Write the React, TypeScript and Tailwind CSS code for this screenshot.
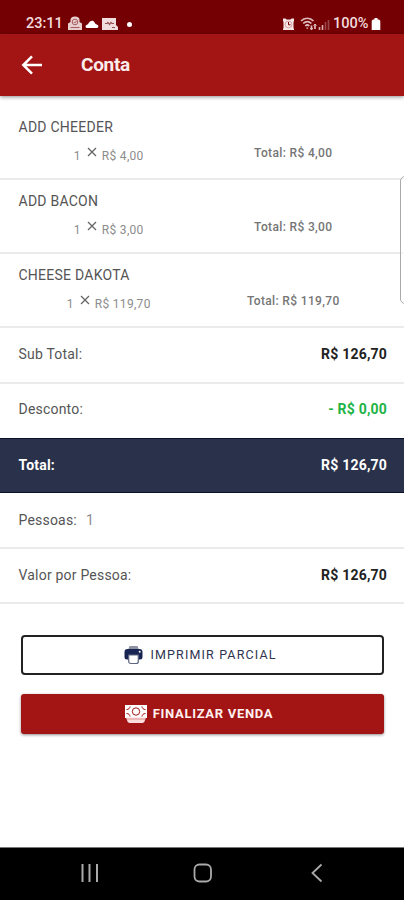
import React from 'react';
import clsx from 'clsx';

interface OrderItem {
  name: string;
  qty: number;
  price: string;
  total: string;
}

const items: OrderItem[] = [
  { name: 'ADD CHEEDER', qty: 1, price: 'R$ 4,00', total: 'R$ 4,00' },
  { name: 'ADD BACON', qty: 1, price: 'R$ 3,00', total: 'R$ 3,00' },
  { name: 'CHEESE DAKOTA', qty: 1, price: 'R$ 119,70', total: 'R$ 119,70' },
];

function StatusBar() {
  return (
    <div className="flex h-[34px] items-end justify-between bg-[#750003] pb-[1px] pl-[26px] pr-[23px] text-[#f3dcdc]">
      <div className="flex h-[18px] items-center">
        <span className="w-[37px] whitespace-nowrap text-[14.5px] font-medium leading-[18px]">23:11</span>
        <svg className="ml-[4px]" width="16" height="16" viewBox="0 0 16 16">
          <path d="M1 14V7.500L3.500 6V4a4.500 3.500 0 0 1 9 0v2L15 7.500V14z" fill="#e8cfcf" />
          <circle cx="8" cy="6" r="2.800" fill="none" stroke="#a85a5c" strokeWidth="1" />
          <path d="M6.800 6l1 1 1.700-2M3.500 11.500h9" fill="none" stroke="#a85a5c" strokeWidth="1" />
        </svg>
        <svg className="ml-[2px]" width="14" height="16" viewBox="0 0 14 16">
          <path d="M2 12a1.500 1.500 0 0 1-.5-2.900C3 8.500 3.500 7 5 5.500c1.400-1.300 3.300-1.100 4.300.5.600 1.300 1.500 2.200 2.900 2.800A1.700 1.700 0 0 1 12.300 12z" fill="#fff" />
        </svg>
        <svg className="ml-[3px]" width="16" height="16" viewBox="0 0 16 16">
          <path d="M0 2h14v7l2 2v3H0z" fill="#f0dede" />
          <path d="M3 7.500h2l1-1 1.500 2 1.500-2 1 1h2M10 11.500h3" fill="none" stroke="#985052" strokeWidth="1.200" />
        </svg>
        <span className="ml-[9px] size-[5px] rounded-full bg-white" />
      </div>
      <div className="flex h-[18px] items-center">
        <svg className="mr-[2px]" width="11" height="14" viewBox="0 0 11 14">
          <path d="M0 1.500h2.500l1 1h4l1-1H11V4l-.5 1v6l.5 1v1H0v-1l.5-1V5L0 4z" fill="#f6e6e6" />
          <path d="M5.500 5v2.800h2" fill="none" stroke="#750003" strokeWidth="1" />
          <circle cx="5.500" cy="7.500" r="3.400" fill="none" stroke="#b87577" strokeWidth=".6" />
        </svg>
        <svg className="ml-[4px]" width="18" height="16" viewBox="0 0 18 16" fill="none" stroke="#dfbcbc" strokeWidth="1.700">
          <path d="M1 5C4.500 1.300 10 1.300 13.500 5M3.200 7.500c2.600-2.600 5.600-2.600 8.200 0M5.300 10c1.300-1.300 2.700-1.300 4 0" />
          <path d="M7.300 11.500v1.300M11.500 9.500v4.500M15 8v5" />
          <path d="M10 12l1.500 1.500L13 12M13.500 9.500L15 8l1.500 1.500" strokeWidth="1" />
        </svg>
        <svg width="13" height="16" viewBox="0 0 13 16" stroke="#d9b0b0" strokeWidth="1.600">
          <path d="M1.500 14v-3M4.500 14V9" />
          <path d="M7.500 14V6M10.500 14V4" stroke="#96474a" />
        </svg>
        <span className="ml-[2px] w-[38px] whitespace-nowrap text-[14.5px] font-medium leading-[18px]">100%</span>
        <svg width="10" height="14" viewBox="0 0 10 14">
          <path d="M3.500 1h3v1.500H8l1.300 1.200V13H.7V3.700L2 2.500h1.500z" fill="#fff" />
        </svg>
      </div>
    </div>
  );
}

function AppBar() {
  return (
    <header className="flex h-[62px] items-center bg-[#a31414] pl-[21px] shadow-[0_1px_4px_rgba(0,0,0,0.45)]">
      <svg width="22" height="20" viewBox="0 0 22 20" fill="none" stroke="#fff" strokeWidth="2.500">
        <path d="M21 10H2.500M11 1.300L2.300 10l8.700 8.700" />
      </svg>
      <h1 className="ml-[38px] text-[19px] font-bold leading-6 tracking-[-0.3px] text-[#fbecec]">Conta</h1>
    </header>
  );
}

function ItemRow({ item }: { item: OrderItem }) {
  return (
    <div className="h-[74px] border-b-2 border-[#ebebeb] px-[18.5px] pt-[12px]">
      <div className="text-[14px] leading-[18px] tracking-[0.25px] text-[#555]">{item.name}</div>
      <div className="mt-[8px] grid grid-cols-2 text-center text-[12px] leading-[18px]">
        <div className="flex items-center justify-center pr-[3px] tracking-[0.3px] text-[#8c8c8c]">
          <span className="relative top-[3px]">{item.qty}</span>
          <svg className="mb-[2px] ml-[6px] mr-[5px]" width="10" height="10" viewBox="0 0 10 10" stroke="#666" strokeWidth="1.300">
            <path d="M1 1l8 8M9 1L1 9" />
          </svg>
          <span className="relative top-[3px]">{item.price}</span>
        </div>
        <div className="pr-[1px] font-medium tracking-[0.35px] text-[#757575]">Total: {item.total}</div>
      </div>
    </div>
  );
}

interface SummaryRowProps {
  label: string;
  value?: string;
  extra?: string;
  className?: string;
  valueClass?: string;
}

function SummaryRow({ label, value, extra, className, valueClass }: SummaryRowProps) {
  return (
    <div className={clsx('flex items-center justify-between pl-[18.5px] pr-[17px] text-[14px] leading-5 tracking-[0.2px]', className)}>
      <span>
        {label}
        {extra && <span className="ml-[9px] text-[#8c8c8c]">{extra}</span>}
      </span>
      {value && <span className={clsx('font-bold', valueClass || 'text-[#222]')}>{value}</span>}
    </div>
  );
}

function PrinterIcon() {
  return (
    <svg width="19" height="20" viewBox="0 0 19 20">
      <path d="M5.500 1h8l1.500 4H4z" fill="#8d93a3" />
      <path d="M3.500 4h12a3 3 0 0 1 3 3v5a2.500 2.500 0 0 1-2.500 2.500H3A2.500 2.500 0 0 1 .5 12V7a3 3 0 0 1 3-3z" fill="#182451" />
      <path d="M4.700 10h9.600v6.500a2 2 0 0 1-2 2H6.700a2 2 0 0 1-2-2z" fill="#fff" stroke="#5c6480" strokeWidth="1.200" />
      <circle cx="15.700" cy="6.800" r="1" fill="#fff" />
    </svg>
  );
}

function CashIcon() {
  return (
    <svg width="22" height="18" viewBox="0 0 22 18">
      <path d="M0 0h22v13H0z" fill="#fff" />
      <path d="M1 12.500h20l-1.500 4-1.500 1.500H4l-1.500-1.500z" fill="#fbdcdc" />
      <g fill="none" stroke="#a31414" strokeWidth="1">
        <circle cx="11" cy="6.500" r="3.700" />
        <path d="M1.500 4.500C3.500 4.500 5 3.300 5 1.500M17 1.500c0 1.800 1.500 3 3.500 3M1.500 8.500c2 0 3.500 1.200 3.500 3M17 11.500c0-1.800 1.500-3 3.500-3" />
      </g>
      <path d="M2 14h18" stroke="#cf7474" strokeWidth=".7" />
    </svg>
  );
}

function NavBar() {
  return (
    <nav className="flex h-[53px] items-center border-t border-[#777] bg-black pb-[3px] pl-[80px]">
      <svg width="20" height="20" viewBox="0 0 20 20" stroke="#aaa" strokeWidth="2">
        <path d="M2.500 1v18M9.500 1v18M17 1v18" />
      </svg>
      <svg className="ml-[93px]" width="20" height="20" viewBox="0 0 20 20" fill="none" stroke="#aaa" strokeWidth="1.800">
        <rect x="1.500" y="1.500" width="16.500" height="17" rx="5" />
      </svg>
      <svg className="ml-[97px]" width="14" height="20" viewBox="0 0 14 20" fill="none" stroke="#aaa" strokeWidth="1.800">
        <path d="M11.500 1.500L2.500 10l9 8.500" />
      </svg>
    </nav>
  );
}

export default function App() {
  return (
    <div className="relative flex h-[900px] w-[404px] flex-col overflow-hidden bg-white font-['Roboto',sans-serif]">
      <StatusBar />
      <AppBar />

      <main className="flex-1 pt-[10px]">
        {items.map((item) => (
          <ItemRow key={item.name} item={item} />
        ))}

        <SummaryRow label="Sub Total:" value="R$ 126,70" className="h-[56px] border-b-2 border-[#ebebeb] pb-[2px] text-[#555]" />
        <SummaryRow label="Desconto:" value="- R$ 0,00" className="h-[54px] pb-[4px] text-[#555]" valueClass="text-[#20b346]" />
        <SummaryRow
          label="Total:"
          value="R$ 126,70"
          className="h-[55px] border-y border-[#0b102c] bg-[#2a324b] pb-[1px] font-bold text-white"
          valueClass="text-white"
        />
        <SummaryRow label="Pessoas:" extra="1" className="h-[56px] border-b-2 border-[#ebebeb] text-[#555]" />
        <SummaryRow label="Valor por Pessoa:" value="R$ 126,70" className="h-[55px] border-b-2 border-[#ebebeb] pb-[2px] text-[#555]" />

        {/* Actions */}
        <div className="mt-[31px] flex flex-col gap-[19px] pl-[21px] pr-[20px]">
          <button className="flex h-[40px] items-center justify-center rounded-[4px] border-2 border-[#222] pr-[4px] text-[12.5px] tracking-[1.15px] text-[#2f3450]">
            <PrinterIcon />
            <span className="ml-[7px]">IMPRIMIR PARCIAL</span>
          </button>
          <button className="flex h-[40px] items-center justify-center rounded-[3px] bg-[#a31414] pr-[7px] text-[13px] font-bold tracking-[0.7px] text-[#fff0f0] shadow-[0_1px_3px_rgba(0,0,0,0.45)]">
            <CashIcon />
            <span className="ml-[6px]">FINALIZAR VENDA</span>
          </button>
        </div>
      </main>

      <NavBar />

      {/* edge panel handle */}
      <div className="absolute right-[-6px] top-[176px] h-[128px] w-[10px] rounded-[5px] border border-[#aaa] bg-white/60" />
    </div>
  );
}
